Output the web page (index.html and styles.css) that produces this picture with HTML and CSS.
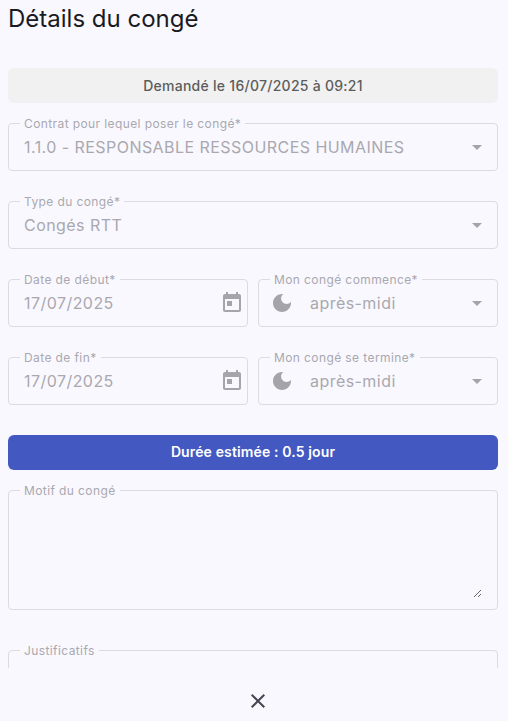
FILE: index.html
```
<!DOCTYPE html>
<html lang="fr">
<head>
    <meta charset="UTF-8">
    <meta name="viewport" content="width=device-width, initial-scale=1.0">
    <title>Détails du congé</title>
    <link rel="stylesheet" href="styles.css">
</head>
<body>
    <svg class="sprite">
        <symbol id="icon-today" viewBox="0 0 24 24">
            <path d="M19 3h-1V1h-2v2H8V1H6v2H5c-1.11 0-1.99.9-1.99 2L3 19c0 1.1.89 2 2 2h14c1.1 0 2-.9 2-2V5c0-1.1-.9-2-2-2zm0 16H5V8h14v11zM7 10h5v5H7z"/>
        </symbol>
        <symbol id="icon-moon" viewBox="0 0 24 24">
            <path d="M12 3c-4.970 0-9 4.030-9 9s4.030 9 9 9 9-4.030 9-9c0-.460-.040-.920-.100-1.360-.980 1.370-2.580 2.260-4.400 2.260-2.980 0-5.400-2.420-5.400-5.400 0-1.810.890-3.420 2.260-4.400-.440-.060-.900-.100-1.360-.100z"/>
        </symbol>
    </svg>

    <main class="content">
        <h1>Détails du congé</h1>
        <div class="banner">Demandé le 16/07/2025 à 09:21</div>

        <form class="leave-form">
            <fieldset class="field">
                <legend>Contrat pour lequel poser le congé*</legend>
                <div class="field-row">
                    <span class="value">1.1.0 - RESPONSABLE RESSOURCES HUMAINES</span>
                    <span class="arrow"></span>
                </div>
            </fieldset>
            <fieldset class="field">
                <legend>Type du congé*</legend>
                <div class="field-row">
                    <span class="value">Congés RTT</span>
                    <span class="arrow"></span>
                </div>
            </fieldset>
            <div class="columns">
                <fieldset class="field">
                    <legend>Date de début*</legend>
                    <div class="field-row date">
                        <span class="value">17/07/2025</span>
                        <svg class="icon"><use href="#icon-today"/></svg>
                    </div>
                </fieldset>
                <fieldset class="field">
                    <legend>Mon congé commence*</legend>
                    <div class="field-row period">
                        <svg class="icon"><use href="#icon-moon"/></svg>
                        <span class="value">après-midi</span>
                        <span class="arrow"></span>
                    </div>
                </fieldset>
            </div>
            <div class="columns">
                <fieldset class="field">
                    <legend>Date de fin*</legend>
                    <div class="field-row date">
                        <span class="value">17/07/2025</span>
                        <svg class="icon"><use href="#icon-today"/></svg>
                    </div>
                </fieldset>
                <fieldset class="field">
                    <legend>Mon congé se termine*</legend>
                    <div class="field-row period">
                        <svg class="icon"><use href="#icon-moon"/></svg>
                        <span class="value">après-midi</span>
                        <span class="arrow"></span>
                    </div>
                </fieldset>
            </div>
        </form>

        <div class="banner duration">Durée estimée : 0.5 jour</div>

        <fieldset class="field reason">
            <legend>Motif du congé</legend>
            <textarea disabled></textarea>
        </fieldset>
        <fieldset class="field files">
            <legend>Justificatifs</legend>
        </fieldset>
    </main>

    <footer>
        <button type="button" class="close" aria-label="Fermer">
            <svg viewBox="0 0 24 24"><path d="M19 6.410L17.590 5 12 10.590 6.410 5 5 6.410 10.590 12 5 17.590 6.410 19 12 13.410 17.590 19 19 17.590 13.410 12z"/></svg>
        </button>
    </footer>
</body>
</html>
```
FILE: styles.css
```
* {
    box-sizing: border-box;
}

body {
    margin: 0;
    height: 100vh;
    display: flex;
    flex-direction: column;
    overflow: hidden;
    background-color: #f9f8ff;
    color: #1a1b21;
    font-family: Inter, sans-serif;
}

.sprite {
    display: none;
}

.content {
    height: 668px;
    flex-shrink: 0;
    padding: 3px 10px 0 8px;
    overflow: hidden;
}

h1 {
    margin: 0 0 33px;
    font-size: 24px;
    font-weight: 400;
    line-height: 32px;
}

.banner {
    height: 35px;
    border-radius: 6px;
    background-color: #f1f1f1;
    color: #5c5c5c;
    font-size: 14px;
    font-weight: 500;
    line-height: 35px;
    letter-spacing: 0.27px;
    text-align: center;
}

.duration {
    background-color: #4359c1;
    color: #fff;
    font-weight: 600;
    line-height: 34px;
    letter-spacing: 0.13px;
}

.leave-form {
    display: flex;
    flex-direction: column;
    gap: 30px;
    margin: 20px 0 30px;
}

.columns {
    display: grid;
    grid-template-columns: 1fr 1fr;
    gap: 10px;
}

.field {
    min-width: 0;
    height: 48px;
    margin: 0;
    padding: 0 15px 0 11px;
    border: 1px solid #dcdbe1;
    border-radius: 4px;
    color: #a9a8ae;
}

/* 1px tall so the label sits on the border line */
legend {
    height: 1px;
    padding: 0 4px;
    font-size: 12px;
    line-height: 1px;
    letter-spacing: 0.4px;
    white-space: nowrap;
}

.field-row {
    display: flex;
    align-items: center;
    height: 46px;
    padding-left: 4px;
}

.value {
    flex: 1;
    font-size: 16px;
    line-height: 24px;
    letter-spacing: 0.45px;
    white-space: nowrap;
}

.arrow {
    border: 5px solid transparent;
    border-top-color: #a5a4aa;
    border-bottom: 0;
}

.icon {
    width: 24px;
    height: 24px;
    fill: #a5a4aa;
}

.date {
    margin-right: -12px;
}

.period {
    padding-left: 0;
}

.period .value {
    margin-left: 16px;
}

.reason {
    height: 120px;
    margin: 20px 0 40px;
}

textarea {
    display: block;
    width: 100%;
    height: 94px;
    margin-top: 13px;
    padding: 0;
    border: 0;
    background: transparent;
    resize: vertical;
}

footer {
    flex: 1;
    display: flex;
    justify-content: center;
    padding: 21px 0 0 8px;
}

.close {
    width: 24px;
    height: 24px;
    padding: 0;
    border: 0;
    background: none;
}

.close svg {
    display: block;
    fill: #45464f;
}
```
